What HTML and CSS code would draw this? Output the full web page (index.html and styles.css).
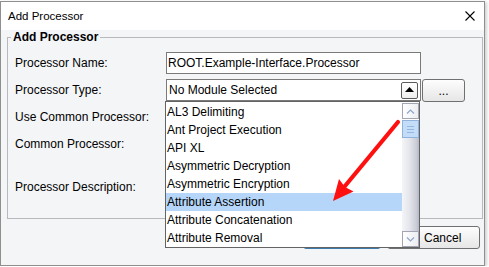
FILE: index.html
```html
<!DOCTYPE html>
<html>
<head>
<meta charset="utf-8">
<link rel="stylesheet" href="styles.css">
</head>
<body>
<div class="window">
  <div class="titlebar">
    <span class="title">Add Processor</span>
    <svg class="close" width="10" height="10" viewBox="0 0 10 10"><path d="M0.5 0.5 L9.5 9.5 M9.5 0.5 L0.5 9.5" stroke="#000" stroke-width="1.1" fill="none"/></svg>
  </div>
  <fieldset class="group">
    <legend>Add Processor</legend>
    <div class="form">
      <div class="label">Processor Name:</div>
      <input class="textfield" type="text" value="ROOT.Example-Interface.Processor">
      <div></div>

      <div class="label">Processor Type:</div>
      <div class="combo">
        <span class="combo-text">No Module Selected</span>
        <span class="combo-btn"><svg width="9" height="5" viewBox="0 0 9 5"><path d="M0 5 L4.5 0 L9 5 Z" fill="#000"/></svg></span>
      </div>
      <button class="btn dots">...</button>

      <div class="label">Use Common Processor:</div>
      <div class="cell"><input type="checkbox" class="check"></div>
      <div></div>

      <div class="label">Common Processor:</div>
      <div class="combo under"></div>
      <div></div>

      <div class="label">Processor Description:</div>
      <div class="textarea under"></div>
      <div></div>
    </div>
  </fieldset>
  <div class="buttons">
    <button class="btn ok">OK</button>
    <button class="btn cancel">Cancel</button>
  </div>

  <div class="popup">
    <ul class="items">
      <li>AL3 Delimiting</li>
      <li>Ant Project Execution</li>
      <li>API XL</li>
      <li>Asymmetric Decryption</li>
      <li>Asymmetric Encryption</li>
      <li class="selected">Attribute Assertion</li>
      <li>Attribute Concatenation</li>
      <li>Attribute Removal</li>
    </ul>
    <div class="vscroll">
      <div class="sb-btn"><svg width="9" height="5" viewBox="0 0 9 5"><path d="M1 4.5 L4.5 1 L8 4.5" stroke="#8ea6c9" stroke-width="1.2" fill="none"/></svg></div>
      <div class="thumb"><i></i><i></i><i></i></div>
      <div class="track"></div>
      <div class="sb-btn"><svg width="9" height="5" viewBox="0 0 9 5"><path d="M1 0.5 L4.5 4 L8 0.5" stroke="#8ea6c9" stroke-width="1.2" fill="none"/></svg></div>
    </div>
  </div>

  <svg class="arrow" width="483" height="263" viewBox="0 0 483 263">
    <g transform="translate(-1,-2)">
      <line x1="398" y1="122" x2="345" y2="186" stroke="#ff1010" stroke-width="4.2" stroke-linecap="round"/>
      <path d="M333 201 L353.5 191.5 L345 187 L339 179 Z" fill="#ff1010"/>
    </g>
  </svg>
</div>
</body>
</html>
```

FILE: styles.css
```css
* { box-sizing: border-box; }

body {
  margin: 0;
  background: #ffffff;
  font-family: "Liberation Sans", Arial, sans-serif;
  font-size: 12px;
  color: #000;
}

.window {
  position: relative;
  width: 485px;
  height: 265px;
  margin-top: 1px;
  border: 1px solid #8f8f8f;
  background: #f4f5f7;
  box-shadow: 2px 1px 3px rgba(0, 0, 0, 0.18);
}

.titlebar {
  height: 28px;
  background: #ffffff;
  display: flex;
  align-items: center;
  justify-content: space-between;
  padding: 0 9px 0 7px;
}

.title {
  font-size: 11.5px;
}

.close {
  display: block;
}

.group {
  margin: 0 1px 0 6px;
  padding: 0 0 4px 0;
  border: 1px solid #b7b9bd;
  min-width: 0;
}

.group legend {
  margin-left: 3px;
  padding: 0 2px;
  font-weight: bold;
  font-size: 12px;
  line-height: 14px;
}

.form {
  display: grid;
  grid-template-columns: 150px 255px 43px;
  grid-template-rows: 22px 22px 22px 22px 54px;
  column-gap: 1px;
  row-gap: 5px;
  margin-top: 8px;
  padding-left: 7px;
}

.label {
  align-self: center;
  white-space: nowrap;
}

.textfield {
  width: 255px;
  height: 22px;
  margin: 0;
  border: 1px solid #7a7a7a;
  background: #fff;
  padding: 0 1px;
  font: inherit;
  color: #000;
  outline: none;
}

.combo {
  display: flex;
  align-items: center;
  justify-content: space-between;
  height: 22px;
  border: 1px solid #7a7a7a;
  background: #fff;
  padding: 0 2px 0 2px;
}

.combo-btn {
  width: 17px;
  height: 17px;
  border: 1px solid #5a5a5a;
  border-radius: 2px;
  background: linear-gradient(#ffffff, #eeeeee);
  display: flex;
  align-items: center;
  justify-content: center;
  padding-bottom: 1px;
}

.combo-btn svg { display: block; }

.btn {
  font: inherit;
  color: #000;
  border: 1px solid #707070;
  border-radius: 3px;
  background: linear-gradient(#fdfdfd, #e6e6e6);
  padding: 0;
  margin: 0;
}

.dots {
  height: 23px;
  align-self: start;
  line-height: 20px;
}

.cell {
  display: flex;
  align-items: center;
}

.check { margin: 0 0 0 2px; }

.textarea {
  border: 1px solid #7a7a7a;
  background: #fff;
  width: 254px;
}

.under { width: 254px; }

.buttons {
  display: flex;
  justify-content: flex-end;
  gap: 6px;
  margin-top: 7px;
  padding-right: 4px;
}

.ok {
  width: 78px;
  height: 23px;
  border-color: #3d7bad;
  background: linear-gradient(#eaf4fc, #c8e0f4);
}

.cancel {
  width: 93px;
  height: 23px;
  text-align: left;
  padding-left: 36px;
}

.popup {
  position: absolute;
  left: 164px;
  top: 99px;
  width: 255px;
  height: 147px;
  border: 1px solid #646464;
  background: #fff;
  display: flex;
  padding-top: 1px;
}

.items {
  list-style: none;
  margin: 0;
  padding: 0;
  flex: 1;
}

.items li {
  height: 18px;
  line-height: 18px;
  padding-left: 1px;
  white-space: nowrap;
}

.items li.selected {
  background: #b5d6f8;
}

.vscroll {
  width: 17px;
  display: flex;
  flex-direction: column;
}

.sb-btn {
  height: 16px;
  border: 1px solid #a3a6b2;
  background: linear-gradient(to right, #ffffff, #eceef2);
  display: flex;
  align-items: center;
  justify-content: center;
}

.sb-btn svg { display: block; }

.thumb {
  height: 18px;
  margin-top: 1px;
  border: 1px solid #8fb3de;
  background: #c3ddf8;
  display: flex;
  flex-direction: column;
  align-items: center;
  justify-content: center;
  gap: 2px;
}

.thumb i {
  display: block;
  width: 7px;
  height: 1px;
  background: #94b6df;
}

.track {
  flex: 1;
  background: linear-gradient(to right, #f4f5f8, #e4e5eb 45%, #c9cbd6 85%, #b4b7c5);
}

.arrow {
  position: absolute;
  left: 0;
  top: 0;
  pointer-events: none;
}
```
